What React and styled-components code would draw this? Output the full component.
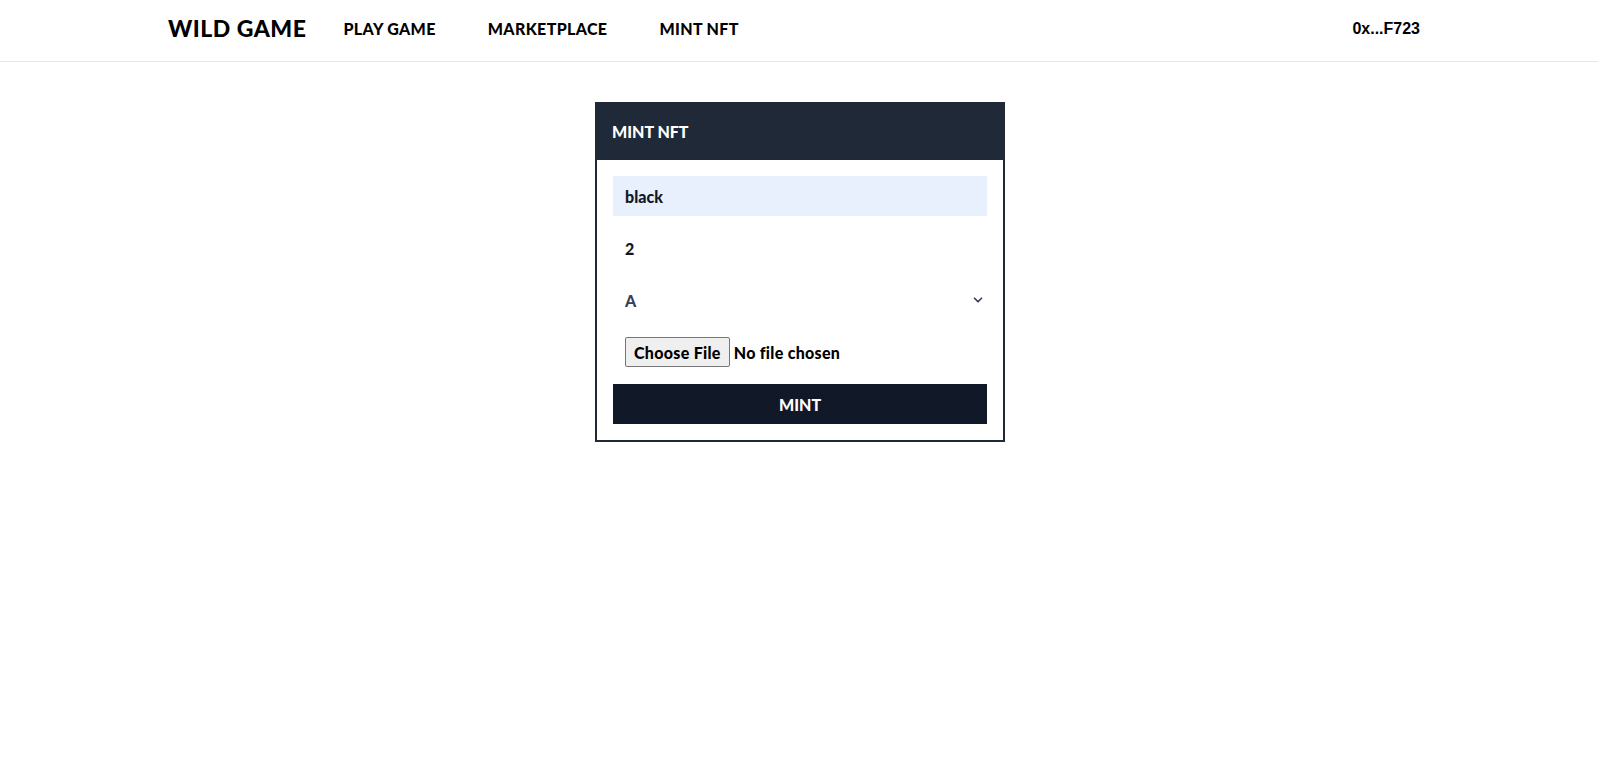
import React from "react"
import styled, { createGlobalStyle } from "styled-components"
import { ChevronDown } from "lucide-react"

const GlobalStyle = createGlobalStyle`
    body {
        margin: 0;
        background: #ffffff;
        font-family: "Lato", "Noto Sans", sans-serif;
        color: #111827;
    }
    * { box-sizing: border-box; }
`

const Header = styled.header`
    height: 62px;
    border-bottom: 1px solid #e5e7eb;
`
const HeaderInner = styled.div`
    height: 100%;
    display: flex;
    align-items: center;
    padding: 0 178px 6px 168px;
`
const Logo = styled.a`
    font-size: 23px;
    font-weight: 900;
    color: #000;
    margin-right: 37px;
    letter-spacing: 0.5px;
`
const Nav = styled.nav`
    display: flex;
    gap: 52px;
    padding-top: 2px;
`
const NavLink = styled.a`
    font-size: 16px;
    font-weight: 900;
    letter-spacing: 0.35px;
    color: #000;
`
const Address = styled.span`
    margin-left: auto;
    padding-top: 2px;
    font-family: "Liberation Sans", Arial, sans-serif;
    font-size: 16px;
    font-weight: 700;
    color: #000;
`

const Main = styled.main`
    display: flex;
    justify-content: center;
    padding: 40px 0 0 2px;
`
const Card = styled.div`
    width: 410px;
    border: 2px solid #1f2937;
    background: #fff;
`
const CardHeader = styled.div`
    height: 57px;
    background: #1f2937;
    color: #fff;
    display: flex;
    align-items: center;
    padding: 0 16px;
    margin: -1px -1px 0;
    font-size: 16px;
    font-weight: 900;
`
const CardBody = styled.form`
    display: flex;
    flex-direction: column;
    gap: 12px;
    padding: 16px;
`
const Field = styled.input`
    height: 40px;
    width: 100%;
    border: none;
    outline: none;
    padding: 0 12px;
    font-family: inherit;
    font-size: 16px;
    font-weight: 900;
    color: #111827;
    background: ${p => (p.$filled ? "#e8f0fe" : "#fff")};
`
const SelectWrap = styled.div`
    position: relative;
    height: 40px;
`
const Select = styled.select`
    appearance: none;
    width: 100%;
    height: 100%;
    border: none;
    outline: none;
    background: #fff;
    padding: 0 12px;
    font-family: inherit;
    font-size: 16px;
    font-weight: 900;
    color: #374151;
`
const Chevron = styled(ChevronDown)`
    position: absolute;
    right: 2px;
    top: 13px;
    pointer-events: none;
    color: #374151;
`
const FileRow = styled.div`
    height: 40px;
    display: flex;
    align-items: center;
    padding: 0 12px;
`
const FileInput = styled.input`
    font-family: inherit;
    font-size: 16px;
    font-weight: 900;
    color: #000;
    letter-spacing: 0.3px;
    &::file-selector-button {
        font-family: inherit;
        font-size: 16px;
        font-weight: 900;
        letter-spacing: 0.3px;
        height: 30px;
        padding: 0 8px;
        margin-right: 4px;
        background: #efefef;
        border: 1px solid #767676;
        border-radius: 2px;
        color: #000;
    }
`
const MintButton = styled.button`
    height: 40px;
    border: none;
    background: #111827;
    color: #fff;
    font-family: inherit;
    font-size: 16px;
    font-weight: 900;
`

const App = () => {
    return (<>
        <GlobalStyle />
        <Header>
            <HeaderInner>
                <Logo>WILD GAME</Logo>
                <Nav>
                    <NavLink>PLAY GAME</NavLink>
                    <NavLink>MARKETPLACE</NavLink>
                    <NavLink>MINT NFT</NavLink>
                </Nav>
                <Address>0x...F723</Address>
            </HeaderInner>
        </Header>
        <Main>
            <Card>
                <CardHeader>MINT NFT</CardHeader>
                <CardBody onSubmit={e => e.preventDefault()}>
                    <Field $filled defaultValue="black" />
                    <Field defaultValue="2" />
                    <SelectWrap>
                        <Select defaultValue="A">
                            <option value="A">A</option>
                            <option value="B">B</option>
                        </Select>
                        <Chevron size={14} strokeWidth={3} />
                    </SelectWrap>
                    <FileRow>
                        <FileInput type="file" />
                    </FileRow>
                    <MintButton type="submit">MINT</MintButton>
                </CardBody>
            </Card>
        </Main>
    </>)
}
export default App
